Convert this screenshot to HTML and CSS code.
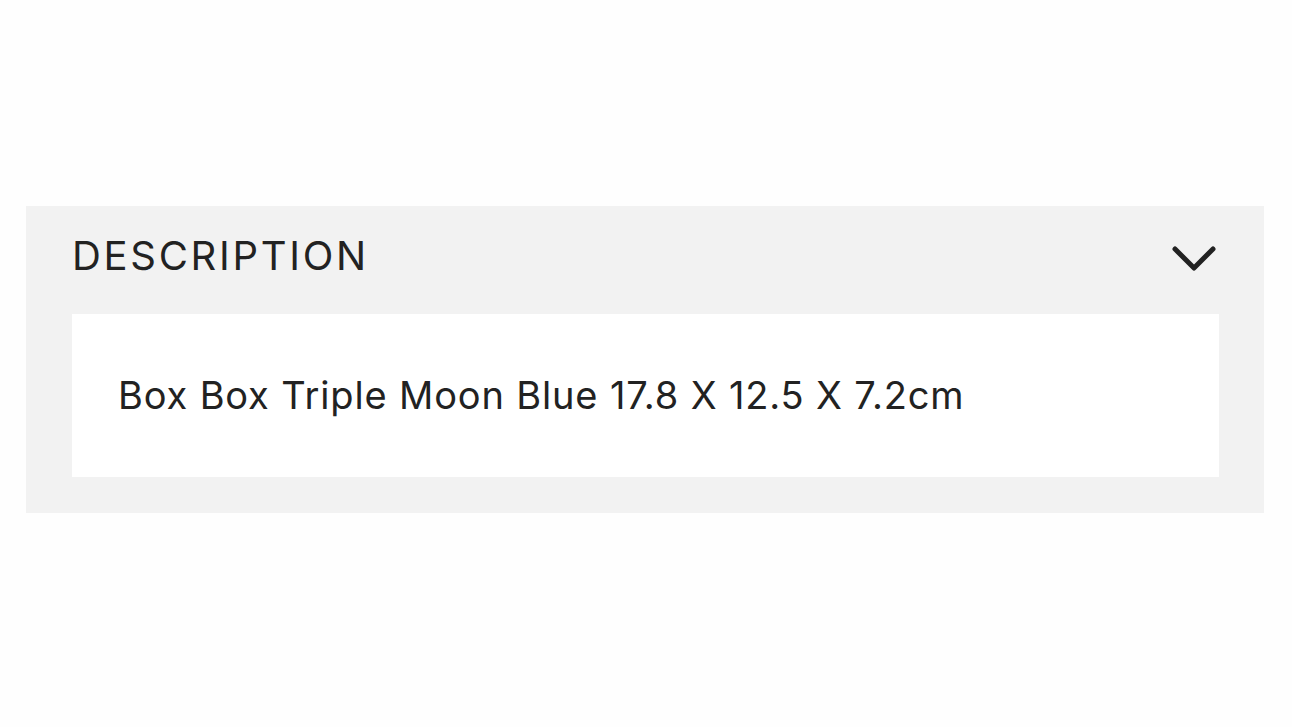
FILE: index.html
```html
<!DOCTYPE html>
<html lang="en">
<head>
<meta charset="utf-8">
<title>Description</title>
<link rel="stylesheet" href="styles.css">
</head>
<body>
<main class="page">
  <section class="accordion">
    <header class="accordion-head">
      <h2 class="accordion-title">DESCRIPTION</h2>
      <svg class="chevron" width="44" height="28" viewBox="0 0 44 28" aria-hidden="true">
        <path d="M3 3 L22 22 L41 3" fill="none" stroke="#222" stroke-width="5" stroke-linecap="round" stroke-linejoin="round"/>
      </svg>
    </header>
    <div class="accordion-body">
      <p class="desc">Box Box Triple Moon Blue 17.8 X 12.5 X 7.2cm</p>
    </div>
  </section>
</main>
</body>
</html>
```

FILE: styles.css
```css
* { box-sizing: border-box; }
html, body { margin: 0; padding: 0; background: #fefefe; }
body {
  font-family: "Inter", "Open Sans", "Liberation Sans", sans-serif;
  color: #222222;
}
.page {
  padding: 206px 28px 0 26px;
}
.accordion {
  background: #f2f2f2;
  padding: 0 45px 36px 46px;
}
.accordion-head {
  height: 108px;
  display: flex;
  align-items: center;
  justify-content: space-between;
  padding-bottom: 8px;
}
.accordion-title {
  margin: 0;
  font-weight: 400;
  font-size: 40px;
  letter-spacing: 2.7px;
  line-height: 1;
}
.chevron {
  display: block;
  margin-right: 3px;
  margin-top: 8px;
}
.accordion-body {
  background: #ffffff;
  height: 163px;
  display: flex;
  align-items: center;
  padding: 0 46px;
}
.desc {
  margin: 0;
  font-size: 38px;
  letter-spacing: 0.85px;
  line-height: 1;
  padding-bottom: 2px;
}
```
